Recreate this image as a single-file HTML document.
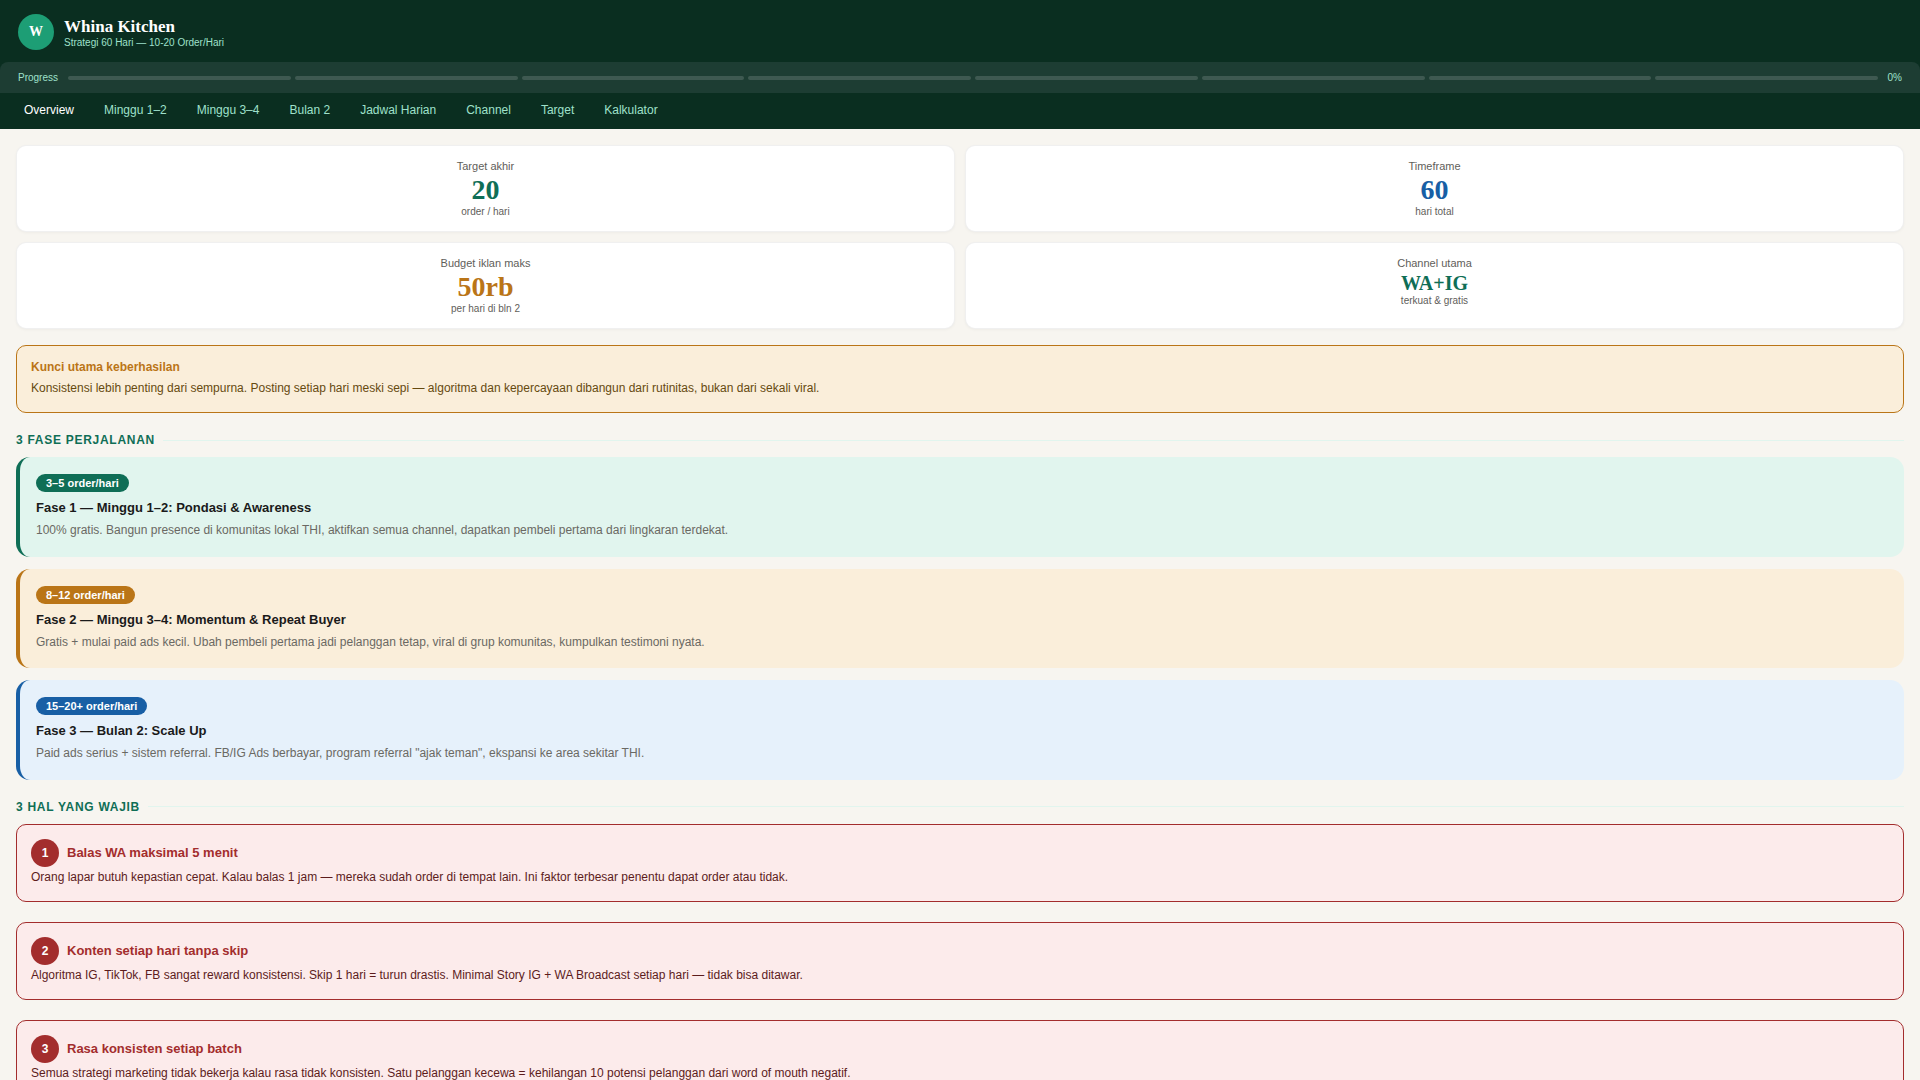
<!DOCTYPE html>
<html lang="id">
<head>
<meta charset="utf-8">
<title>Whina Kitchen</title>
<style>
*{box-sizing:border-box;margin:0;padding:0}
html,body{width:1920px;height:1080px;overflow:hidden}
body{background:#f7f5f0;font-family:"Liberation Sans",sans-serif;color:#1a1a1a}
.hdr{background:#0a2e20;height:129px;position:relative}
.top{height:62px;position:relative}
.av{position:absolute;left:18px;top:14px;width:36px;height:36px;border-radius:50%;background:#1d9e75;color:#fff;font-family:"Liberation Serif",serif;font-weight:700;font-size:14px;text-align:center;line-height:36px}
.ttl{position:absolute;left:64px;top:17px;font-family:"Liberation Serif",serif;font-weight:700;font-size:17px;color:#fff;line-height:20px}
.sub{position:absolute;left:64px;top:37px;font-size:10px;color:#9fe1cb;line-height:12px}
.prog{height:31px;background:#1d3d33;border-radius:8px 8px 0 0;display:flex;align-items:center;padding:0 18px}
.prog .lb{font-size:10px;color:#9fe1cb;width:50px}
.segs{flex:1;display:flex;gap:4px}
.segs i{flex:1;height:4px;border-radius:2px;background:rgba(255,255,255,.15)}
.prog .pc{font-size:10px;color:#9fe1cb;width:24px;text-align:right}
.nav{height:36px;display:flex;padding-left:9px;align-items:center}
.nav span{font-size:12px;color:#9fe1cb;padding:0 15px;line-height:34px;height:36px}
.nav span.on{color:#fff}
.main{padding:16px 16px 0}
.grid{display:grid;grid-template-columns:1fr 1fr;gap:10px}
.card{background:#fff;border:1px solid rgba(0,0,0,.06);border-radius:10px;height:87px;text-align:center;box-shadow:0 1px 3px rgba(0,0,0,.04);padding-top:14px}
.card .l{font-size:11px;color:#5f5e5a;line-height:13px}
.card .v{font-family:"Liberation Serif",serif;font-weight:700;font-size:28px;line-height:32px;margin-top:1px}
.card .s{font-size:10px;color:#5f5e5a;line-height:12px}
.alert{margin-top:16px;border:1px solid #ba7517;background:#faeeda;border-radius:10px;height:68px;padding:14px 14px}
.alert b{display:block;font-size:12px;color:#ba7517;line-height:14px}
.alert p{font-size:12px;color:#664a10;line-height:14px;margin-top:7px}
.sec{display:flex;align-items:center;margin-top:20px;height:14px;font-size:12px;font-weight:700;color:#0f6e56;letter-spacing:.72px}
.sec:after{content:"";flex:1;height:1px;background:#e1f5ee;margin-left:8px}
.ph{border-left:4px solid;border-radius:14px;height:99.5px;padding:16px 16px 0;margin-top:12px}
.ph .bd{display:inline-block;color:#fff;font-size:11px;font-weight:700;border-radius:9px;height:18px;line-height:18px;padding:0 10px}
.ph h3{font-size:13px;font-weight:700;color:#1a1a1a;line-height:16px;margin-top:8px}
.ph p{font-size:12px;color:#6a6963;line-height:14px;margin-top:7px}
.rc{border:1px solid #a32d2d;background:#fcebeb;border-radius:10px;height:78px;margin-top:20px;padding:14px 14px;position:relative}
.rc .n{position:absolute;left:14px;top:14px;width:28px;height:28px;border-radius:50%;background:#a32d2d;color:#fff;font-size:12px;font-weight:700;text-align:center;line-height:28px}
.rc h4{font-size:13px;font-weight:700;color:#a32d2d;margin-left:36px;line-height:28px}
.rc p{font-size:12px;color:#5c1c1c;line-height:14px;margin-top:3px}
</style>
</head>
<body>
<div class="hdr">
 <div class="top">
  <div class="av">W</div>
  <div class="ttl">Whina Kitchen</div>
  <div class="sub">Strategi 60 Hari — 10-20 Order/Hari</div>
 </div>
 <div class="prog"><span class="lb">Progress</span><div class="segs"><i></i><i></i><i></i><i></i><i></i><i></i><i></i><i></i></div><span class="pc">0%</span></div>
 <div class="nav"><span class="on">Overview</span><span>Minggu 1–2</span><span>Minggu 3–4</span><span>Bulan 2</span><span>Jadwal Harian</span><span>Channel</span><span>Target</span><span>Kalkulator</span></div>
</div>
<div class="main">
 <div class="grid">
  <div class="card"><div class="l">Target akhir</div><div class="v" style="color:#0f6e56">20</div><div class="s">order / hari</div></div>
  <div class="card"><div class="l">Timeframe</div><div class="v" style="color:#185fa5">60</div><div class="s">hari total</div></div>
  <div class="card"><div class="l">Budget iklan maks</div><div class="v" style="color:#ba7517">50rb</div><div class="s">per hari di bln 2</div></div>
  <div class="card"><div class="l">Channel utama</div><div class="v" style="color:#0f6e56;font-size:20px;line-height:22px;margin-top:2px;margin-bottom:1px">WA+IG</div><div class="s">terkuat &amp; gratis</div></div>
 </div>
 <div class="alert"><b>Kunci utama keberhasilan</b><p>Konsistensi lebih penting dari sempurna. Posting setiap hari meski sepi — algoritma dan kepercayaan dibangun dari rutinitas, bukan dari sekali viral.</p></div>
 <div class="sec">3 FASE PERJALANAN</div>
 <div class="ph" style="background:#e1f5ee;border-color:#0f6e56;margin-top:10px"><span class="bd" style="background:#0f6e56">3–5 order/hari</span><h3>Fase 1 — Minggu 1–2: Pondasi &amp; Awareness</h3><p>100% gratis. Bangun presence di komunitas lokal THI, aktifkan semua channel, dapatkan pembeli pertama dari lingkaran terdekat.</p></div>
 <div class="ph" style="background:#faeeda;border-color:#ba7517"><span class="bd" style="background:#ba7517">8–12 order/hari</span><h3>Fase 2 — Minggu 3–4: Momentum &amp; Repeat Buyer</h3><p>Gratis + mulai paid ads kecil. Ubah pembeli pertama jadi pelanggan tetap, viral di grup komunitas, kumpulkan testimoni nyata.</p></div>
 <div class="ph" style="background:#e6f1fb;border-color:#185fa5"><span class="bd" style="background:#185fa5">15–20+ order/hari</span><h3>Fase 3 — Bulan 2: Scale Up</h3><p>Paid ads serius + sistem referral. FB/IG Ads berbayar, program referral "ajak teman", ekspansi ke area sekitar THI.</p></div>
 <div class="sec">3 HAL YANG WAJIB</div>
 <div class="rc" style="margin-top:10px"><div class="n">1</div><h4>Balas WA maksimal 5 menit</h4><p>Orang lapar butuh kepastian cepat. Kalau balas 1 jam — mereka sudah order di tempat lain. Ini faktor terbesar penentu dapat order atau tidak.</p></div>
 <div class="rc"><div class="n">2</div><h4>Konten setiap hari tanpa skip</h4><p>Algoritma IG, TikTok, FB sangat reward konsistensi. Skip 1 hari = turun drastis. Minimal Story IG + WA Broadcast setiap hari — tidak bisa ditawar.</p></div>
 <div class="rc"><div class="n">3</div><h4>Rasa konsisten setiap batch</h4><p>Semua strategi marketing tidak bekerja kalau rasa tidak konsisten. Satu pelanggan kecewa = kehilangan 10 potensi pelanggan dari word of mouth negatif.</p></div>
</div>
</body>
</html>
